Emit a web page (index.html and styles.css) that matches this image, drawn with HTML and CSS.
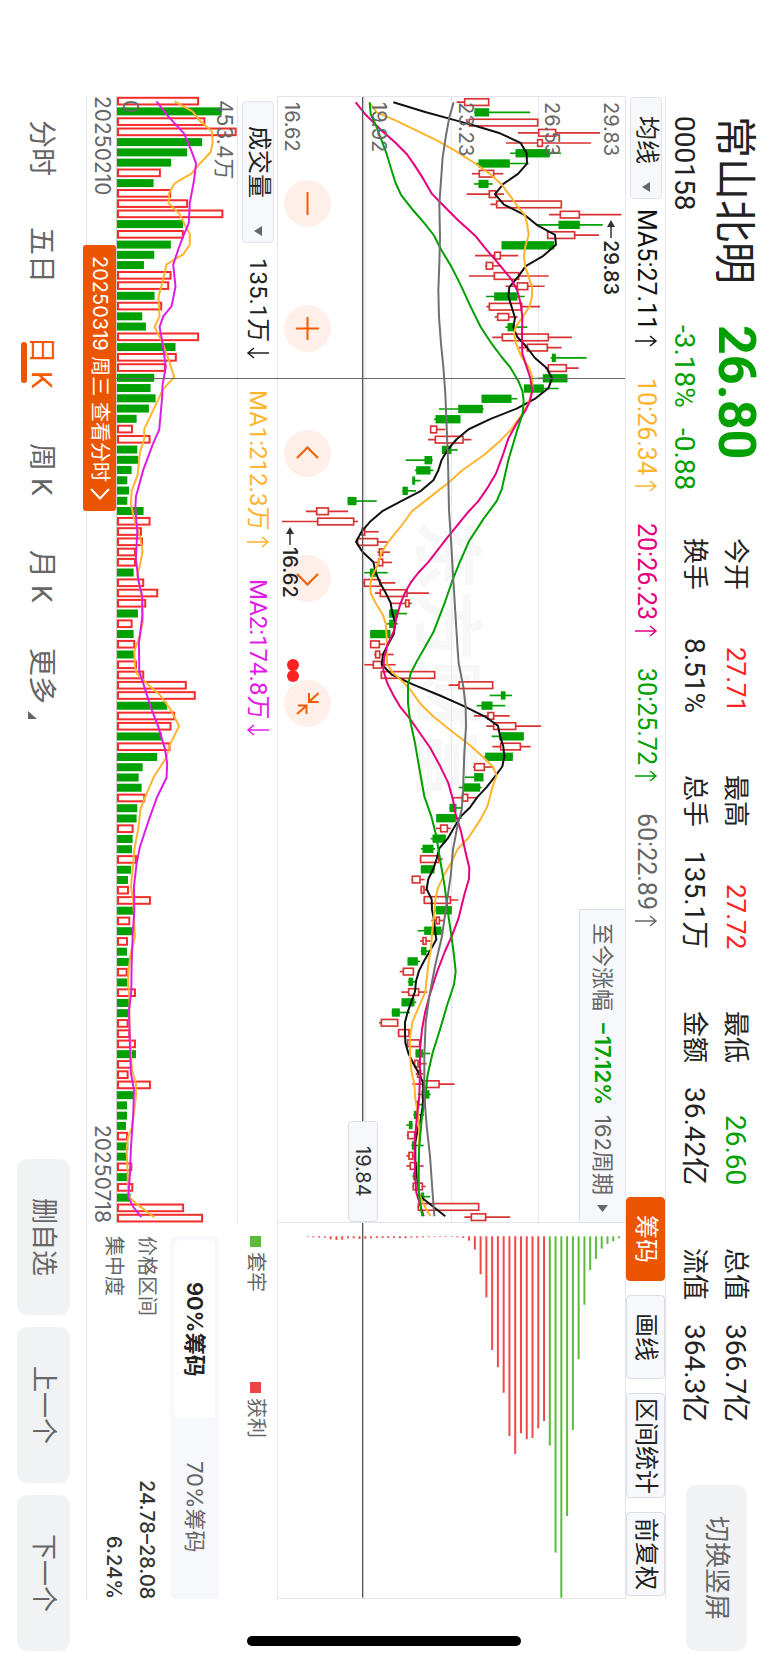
FILE: index.html
```html
<!DOCTYPE html>
<html lang="zh-CN">
<head>
<meta charset="utf-8">
<meta name="viewport" content="width=device-width, initial-scale=1">
<title>常山北明 000158</title>
<link rel="stylesheet" href="styles.css">
</head>
<body>
<div class="screen">
  <header class="quote">
    <div class="identity">
      <h1 class="name">常山北明</h1>
      <span class="code">000158</span>
    </div>
    <div class="price down">
      <strong class="last">26.80</strong>
      <span class="change"><span>-3.18%</span><span>-0.88</span></span>
    </div>
    <dl class="stats">
      <div><dt>今开</dt><dd class="up">27.71</dd></div>
      <div><dt>最高</dt><dd class="up">27.72</dd></div>
      <div><dt>最低</dt><dd class="down">26.60</dd></div>
      <div><dt>总值</dt><dd>366.7亿</dd></div>
      <div><dt>换手</dt><dd>8.51%</dd></div>
      <div><dt>总手</dt><dd>135.1万</dd></div>
      <div><dt>金额</dt><dd>36.42亿</dd></div>
      <div><dt>流值</dt><dd>364.3亿</dd></div>
    </dl>
    <button class="soft-btn rotate-btn" type="button">切换竖屏</button>
  </header>

  <main class="board">
    <div class="toolbar">
      <span class="picker picker-main">
        <select aria-label="主图指标"><option>均线</option></select>
        <svg class="caret" viewBox="0 0 8 10"><path d="M8 0V10L0 5Z"/></svg>
      </span>
      <div class="legend">
        <span class="ma5">MA5:27.11<svg class="trend" viewBox="0 0 24 12"><path d="M1 6H22M16 1L22 6L16 11"/></svg></span>
        <span class="ma10">10:26.34<svg class="trend" viewBox="0 0 24 12"><path d="M1 6H22M16 1L22 6L16 11"/></svg></span>
        <span class="ma20">20:26.23<svg class="trend" viewBox="0 0 24 12"><path d="M1 6H22M16 1L22 6L16 11"/></svg></span>
        <span class="ma30">30:25.72<svg class="trend" viewBox="0 0 24 12"><path d="M1 6H22M16 1L22 6L16 11"/></svg></span>
        <span class="ma60">60:22.89<svg class="trend" viewBox="0 0 24 12"><path d="M1 6H22M16 1L22 6L16 11"/></svg></span>
      </div>
      <div class="tools">
        <button class="tool active" type="button">筹码</button>
        <button class="tool" type="button">画线</button>
        <button class="tool tool-wide" type="button">区间统计</button>
        <button class="tool" type="button">前复权</button>
      </div>
    </div>

    <section class="kline" aria-label="日K线图">
      <div class="watermark" aria-hidden="true">东方财富</div>
      <svg id="kline" class="plot" viewBox="24 0 1041 3380" preserveAspectRatio="none"></svg>
      <div class="axis">
        <div><span>29.83</span><span>26.53</span></div>
        <div><span>23.23</span></div>
        <div><span>19.92</span></div>
        <div><span>16.62</span></div>
      </div>
      <div class="pads">
        <button class="pad" type="button" aria-label="缩小"><svg viewBox="0 0 47 47"><path d="M23.500 12V35"/></svg></button>
        <button class="pad" type="button" aria-label="放大"><svg viewBox="0 0 47 47"><path d="M23.500 12V35M12 23.500H35"/></svg></button>
        <button class="pad" type="button" aria-label="左移"><svg viewBox="0 0 47 47"><path d="M13 28L23.500 17.500L34 28"/></svg></button>
        <button class="pad" type="button" aria-label="右移"><svg viewBox="0 0 47 47"><path d="M13 19L23.500 29.500L34 19"/></svg></button>
        <button class="pad" type="button" aria-label="收起"><svg viewBox="0 0 47 47"><path d="M13 34L22 26M14 25.500H22.500V34M34.500 13L25.500 21.500M25 13V22H34.500"/></svg></button>
      </div>
      <div class="mark mark-high"><svg class="pointer" viewBox="0 0 8 18"><path d="M4 5V18" /><path class="head" d="M4 0L8 7H0Z"/></svg>29.83</div>
      <div class="mark mark-low"><svg class="pointer" viewBox="0 0 8 18"><path d="M4 5V18" /><path class="head" d="M4 0L8 7H0Z"/></svg>16.62</div>
      <svg class="events" viewBox="0 0 12 23"><circle cx="6" cy="6" r="6"/><circle cx="6" cy="17" r="6"/></svg>
      <button class="range" type="button">至今涨幅 <b class="down">−17.12%</b> 162周期 <svg class="next" viewBox="0 0 11 7"><path d="M0 0H11L5.500 7Z"/></svg></button>
      <output class="cursor-price">19.84</output>
    </section>

    <section class="chips" aria-label="筹码分布">
      <svg id="chips" class="plot" viewBox="24 0 1041 1128" preserveAspectRatio="none"></svg>
    </section>

    <div class="volume-bar">
      <span class="picker picker-volume">
        <select aria-label="副图指标"><option>成交量</option></select>
        <svg class="caret" viewBox="0 0 8 10"><path d="M8 0V10L0 5Z"/></svg>
      </span>
      <div class="legend">
        <span class="vol">135.1万<svg class="trend" viewBox="0 0 24 12"><path d="M23 6H2M8 1L2 6L8 11"/></svg></span>
        <span class="ma10">MA1:212.3万<svg class="trend" viewBox="0 0 24 12"><path d="M1 6H22M16 1L22 6L16 11"/></svg></span>
        <span class="vma2">MA2:174.8万<svg class="trend" viewBox="0 0 24 12"><path d="M23 6H2M8 1L2 6L8 11"/></svg></span>
      </div>
    </div>

    <section class="volume" aria-label="成交量图">
      <svg id="volume" class="plot" viewBox="111 0 361 3380" preserveAspectRatio="none"></svg>
      <div class="volume-axis"><span>453.4万</span><span>0</span></div>
    </section>

    <div class="dates">
      <time datetime="2025-02-10">20250210</time>
      <time datetime="2025-07-18">20250718</time>
      <button class="day-tip" type="button">20250319 周三 查看分时<svg viewBox="0 0 20 12"><path d="M1 1L10 10.500L19 1"/></svg></button>
    </div>

    <aside class="chip-info">
      <div class="chip-legend">
        <span><i class="dot dot-green"></i>套牢</span>
        <span><i class="dot dot-red"></i>获利</span>
      </div>
      <div class="segment">
        <button class="on" type="button">90%筹码</button>
        <button type="button">70%筹码</button>
      </div>
      <dl class="chip-rows">
        <div><dt>价格区间</dt><dd>24.78–28.08</dd></div>
        <div><dt>集中度</dt><dd>6.24%</dd></div>
      </dl>
    </aside>
    <div class="crosshair"></div>
  </main>

  <footer class="bottom">
    <nav class="tabs">
      <a href="#">分时</a>
      <a href="#">五日</a>
      <a href="#" class="current" aria-current="page">日 K</a>
      <a href="#">周 K</a>
      <a href="#">月 K</a>
      <a href="#">更多<svg class="corner" viewBox="0 0 9 8"><path d="M0 0V8H9Z"/></svg></a>
    </nav>
    <div class="actions">
      <button class="soft-btn" type="button">删自选</button>
      <button class="soft-btn" type="button">上一个</button>
      <button class="soft-btn" type="button">下一个</button>
    </div>
  </footer>
  <div class="home-indicator"></div>
</div>
<script src="charts.js"></script>
</body>
</html>
```

FILE: styles.css
```css
:root {
  --green: #00a000;
  --red: #ff2222;
  --orange: #eb5500;
  --ink: #222;
  --muted: #666;
  --line: #e2e4e9;
  --panel: #f7f8fb;
  --soft: #f1f2f4;
  --num: Roboto, "Noto Sans CJK SC", sans-serif;
  --label: Inter, "Noto Sans CJK SC", sans-serif;
}

* { box-sizing: border-box; }

html { writing-mode: vertical-rl; }

body {
  margin: 0;
  writing-mode: vertical-rl;
  text-orientation: sideways;
  background: #fff;
  color: var(--ink);
  font: 24px/1.2 var(--num);
}

button, select {
  writing-mode: inherit;
  text-orientation: inherit;
  font: inherit;
  color: inherit;
  border: 0;
  padding: 0;
  margin: 0;
  background: none;
  cursor: pointer;
}

h1, dl, dd { margin: 0; font-weight: inherit; }

svg { display: block; flex: none; }

.up { color: var(--red); }
.down { color: var(--green); }

.screen {
  position: relative;
  display: flex;
  flex-direction: column;
  inline-size: 100%;
  min-inline-size: 100vh;
  min-block-size: 100vw;
}

/* Quote header */
.quote {
  display: flex;
  align-items: flex-start;
  block-size: 102px;
  padding-inline: 116px 12px;
}

.identity, .price { display: flex; flex-direction: column; }
.identity { margin-inline-end: 41px; }
.price { margin-inline-end: 48px; }

.name {
  font-size: 42px;
  line-height: 50px;
  margin-block-start: 9px;
}

.last {
  font-size: 52px;
  line-height: 50px;
  font-weight: 700;
  margin-block-start: 7px;
}

.code, .change {
  font-size: 28px;
  line-height: 32px;
  margin-block-start: 9px;
}

.change { display: flex; gap: 20px; margin-block-start: 11px; }

.stats {
  flex: 1;
  display: grid;
  grid-template-columns: repeat(4, 1fr);
  column-gap: 62px;
  margin-block-start: 12px;
  margin-inline-end: 63px;
  font-size: 26px;
  line-height: 41px;
}

.stats div { display: flex; justify-content: space-between; white-space: nowrap; }
.stats dd:not(.up) { font-size: 28px; }

.soft-btn {
  flex: none;
  inline-size: 156px;
  block-size: 53px;
  border-radius: 10px;
  background: var(--soft);
  color: var(--muted);
  font-size: 26px;
}

.rotate-btn {
  inline-size: 166px;
  block-size: 61px;
  margin-block-start: 21px;
}

/* Chart board */
.board {
  position: relative;
  flex: 1;
  display: grid;
  grid-template-columns: 3fr 1fr;
  grid-template-rows: 41px 1fr 40px 121px 30px;
  margin-inline: 96px 64px;
}

.toolbar {
  grid-column: 1 / -1;
  display: flex;
  align-items: center;
  border-block: 1px solid var(--line);
}

.picker {
  position: relative;
  display: flex;
  align-items: center;
  border: 1px solid var(--line);
  border-radius: 4px;
  background: var(--panel);
}

.picker select {
  appearance: none;
  inline-size: 100%;
  block-size: 100%;
  line-height: 28px;
}

.picker-main { inline-size: 102px; block-size: 32px; margin-inline-start: 1px; }
.picker-main select { padding-inline-start: 18px; }
.picker-volume { inline-size: 142px; block-size: 32px; margin-inline-start: 5px; }
.picker-volume select { padding-inline-start: 24px; }

.caret {
  position: absolute;
  inset-inline-end: 6px;
  width: 8px;
  height: 10px;
  fill: var(--muted);
  pointer-events: none;
}

.legend { display: flex; gap: 31px; font-size: 25px; white-space: nowrap; }
.toolbar .legend { margin-inline-start: 10px; }
.volume-bar .legend { margin-inline-start: 15px; font-size: 24px; }
.legend > span { display: flex; align-items: center; gap: 5px; }

.trend {
  width: 24px;
  height: 12px;
  fill: none;
  stroke: currentColor;
  stroke-width: 1.500;
}

.ma5 { color: #111; }
.ma10 { color: #ffb42e; }
.ma20 { color: #e6007e; }
.ma30 { color: var(--green); }
.ma60 { color: var(--muted); }
.vma2 { color: #e01be6; }

.tools { display: flex; gap: 14px; margin-inline: auto 3px; }

.tool {
  inline-size: 84px;
  block-size: 39px;
  border: 1px solid #dcdee6;
  border-radius: 4px;
  background: var(--panel);
  white-space: nowrap;
}

.tool-wide { inline-size: 105px; }
.tool.active { background: var(--orange); border-color: var(--orange); color: #fff; }

.kline, .chips, .volume { position: relative; min-inline-size: 0; }
.kline { border-block-end: 1px solid var(--line); border-inline: 1px solid var(--line); }
.chips { border-block-end: 1px solid var(--line); border-inline-end: 1px solid var(--line); }

.plot { position: absolute; inset: 0; width: 100%; height: 100%; }

.grid { stroke: #e2e4ee; stroke-width: 3; }
.cursor { stroke: #555; stroke-width: 4; }
.series { fill: none; stroke-width: 6; stroke-linejoin: round; }
.rise { fill: #fff; stroke: #d83333; stroke-width: 5; }
.fall { fill: var(--green); stroke: var(--green); stroke-width: 5; }
.vol-rise { fill: #fff; stroke: #f52c2c; stroke-width: 6; }
.vol-fall { fill: var(--green); }

.watermark {
  position: absolute;
  inset: 0;
  display: flex;
  align-items: center;
  justify-content: center;
  color: #f7f7f7;
  font: 700 70px/1 "Noto Sans CJK SC", sans-serif;
}

.axis {
  position: absolute;
  inset-block: 0;
  inset-inline-start: 5px;
  display: grid;
  grid-template-rows: repeat(4, 1fr);
  font: 20px/28px var(--label);
  color: var(--muted);
}

.axis div { display: flex; flex-direction: column; justify-content: flex-end; }
.axis div:first-child { justify-content: space-between; }

.pads {
  position: absolute;
  inset-block-end: 6px;
  inset-inline-start: 83px;
  display: flex;
  gap: 78px;
}

.pad {
  inline-size: 47px;
  block-size: 47px;
  border-radius: 50%;
  background: rgba(250, 130, 70, .12);
}

.pad svg {
  width: 47px;
  height: 47px;
  fill: none;
  stroke: #f45a00;
  stroke-width: 2;
}

.mark {
  position: absolute;
  display: flex;
  align-items: center;
  gap: 2px;
  font: 500 20px/24px var(--label);
}

.mark-high { inset-block-start: 2px; inset-inline-start: 123px; }
.mark-low { inset-block-end: 0; inset-inline-start: 430px; }
.pointer { width: 8px; height: 18px; stroke: #333; stroke-width: 1.500; }
.pointer .head { fill: #333; stroke: none; }

.events {
  position: absolute;
  inset-block-end: 9px;
  inset-inline-start: 562px;
  width: 12px;
  height: 23px;
  fill: var(--red);
}

.range {
  position: absolute;
  inset-block-start: 0;
  inset-inline-end: 0;
  display: flex;
  align-items: center;
  gap: 10px;
  inline-size: 313px;
  block-size: 46px;
  padding-inline-start: 13px;
  border: 1px solid #dcdee6;
  border-block-start: 0;
  border-inline-end: 0;
  background: var(--panel);
  color: var(--muted);
  font: 22px/1 var(--label);
  white-space: nowrap;
}

.range b { font-weight: 600; }
.next { width: 11px; height: 7px; fill: var(--muted); }

.cursor-price {
  position: absolute;
  inset-block-end: 70px;
  inset-inline-end: 0;
  inline-size: 101px;
  block-size: 30px;
  border: 1px solid #dcdee6;
  border-radius: 4px;
  background: var(--panel);
  color: #333;
  font: 20px/28px var(--label);
  text-align: center;
}

.volume-bar {
  grid-column: 1;
  display: flex;
  align-items: center;
  border-block-end: 1px solid var(--line);
}

.volume { grid-column: 1; border-block-end: 1px solid #ccc; }

.volume-axis {
  position: absolute;
  inset-block: 0 0;
  inset-inline-start: 4px;
  display: flex;
  flex-direction: column;
  justify-content: space-between;
  font: 21px/26px var(--label);
  color: var(--muted);
}

.dates {
  position: relative;
  grid-column: 1;
  display: flex;
  justify-content: space-between;
  border-block-end: 1px solid var(--line);
  font: 21px/27px var(--label);
  color: var(--muted);
}

.day-tip {
  position: absolute;
  inset-block-start: 0;
  inset-inline-start: 149px;
  display: flex;
  align-items: center;
  justify-content: center;
  gap: 6px;
  inline-size: 266px;
  block-size: 33px;
  border-radius: 3px;
  background: var(--orange);
  color: #fff;
  font-size: 20px;
  white-space: nowrap;
}

.day-tip svg { width: 20px; height: 12px; fill: none; stroke: #fff; stroke-width: 2; }

.crosshair {
  position: absolute;
  inset-block: 41px 30px;
  inset-inline-start: 282px;
  inline-size: 1px;
  background: #666;
}

.chip-info {
  grid-column: 2;
  grid-row: 3 / 6;
  padding-inline-start: 13px;
  border-block-end: 1px solid var(--line);
  font: 20px/33px var(--label);
  color: var(--muted);
}

.chip-legend {
  display: grid;
  grid-template-columns: 146px 1fr;
  margin-block: 5px 20px;
}

.chip-legend span { display: flex; align-items: center; gap: 5px; }
.dot { inline-size: 11px; block-size: 11px; }
.dot-green { background: #5abb3c; }
.dot-red { background: #eb4545; }

.segment {
  display: flex;
  block-size: 49px;
  padding: 4px;
  border-radius: 6px;
  background: var(--panel);
  font-size: 22px;
}

.segment button { flex: 1; border-radius: 6px; }
.segment .on { background: #fff; color: var(--ink); font-weight: 600; }

.chip-rows { margin-block-start: 7px; }
.chip-rows div { display: flex; justify-content: space-between; }
.chip-rows dd { color: #333; font-weight: 500; }

/* Bottom bar */
.bottom {
  flex: none;
  display: flex;
  align-items: center;
  justify-content: space-between;
  block-size: 86px;
  padding-inline: 95px 12px;
}

.tabs {
  display: grid;
  grid-template-columns: repeat(6, 107px);
  margin-block-start: 4px;
}

.tabs a {
  position: relative;
  display: flex;
  align-items: center;
  justify-content: center;
  gap: 7px;
  color: var(--muted);
  font-size: 28px;
  line-height: 34px;
  text-decoration: none;
}

.tabs .current { color: #f45a00; }

.tabs .current::after {
  content: "";
  position: absolute;
  inset-block-end: -3px;
  inset-inline: 33px;
  block-size: 6px;
  border-radius: 3px;
  background: var(--orange);
}

.corner { align-self: flex-end; width: 9px; height: 8px; margin-block-end: 4px; fill: var(--muted); }

.actions { display: flex; gap: 12px; }

.home-indicator {
  position: absolute;
  inset-inline-end: 17px;
  inset-block: 247px;
  inline-size: 10px;
  border-radius: 5px;
  background: #000;
}
```

FILE: charts.js
```js
const NS = "http://www.w3.org/2000/svg";
const STEP = 3380 / 110;

function add(parent, tag, attrs) {
  const el = document.createElementNS(NS, tag);
  for (const key in attrs) el.setAttribute(key, attrs[key]);
  parent.appendChild(el);
  return el;
}

function line(parent, cls, x1, y1, x2, y2) {
  add(parent, "line", { class: cls, x1, y1, x2, y2 });
}

function series(parent, color, points) {
  add(parent, "polyline", { class: "series", stroke: color, points });
}

// Each candle: direction, low, high, body low, body high.
const candles = `r560,657,584,656 g612,780,616,655 r590,805,598,803 r744,990,806,857 r708,963,803,817
g720,873,739,837 g618,776,628,717 r606,700,628,671 g612,668,628,653 r590,702,658,677
r661,875,680,874 r837,1054,871,928 g800,998,868,927 r831,987,833,914 g696,855,697,850
r615,745,674,691 r645,692,649,668 r597,836,673,746 r706,824,742,773 g648,764,675,740
r649,810,658,755 r674,743,683,716 g706,772,715,732 r667,906,697,835 r747,875,772,832
g842,950,848,855 r825,926,835,889 g803,890,821,890 g762,866,764,819 g636,742,637,722
g507,641,567,636 g492,571,499,569 r480,526,482,500 r474,604,496,579 g516,563,518,542
g407,488,466,484 g435,490,441,479 g427,452,429,433 g397,438,400,411 g234,320,235,257
r108,234,140,175 r36,264,143,251 r273,326,276,284 r260,351,263,323 r322,360,328,338
r313,366,326,338 g283,353,302,318 r280,376,283,330 r315,477,331,411 r361,425,407,417
g358,411,360,382 g350,383,360,369 g300,360,303,359 r300,345,302,328 r312,371,317,329
r283,377,310,335 r332,495,334,494 r536,669,567,668 g659,726,695,704 g620,706,637,665
r612,719,654,671 r649,813,671,737 g665,760,690,759 r667,782,692,751 g643,728,648,726
r609,670,614,643 g585,639,615,638 g566,635,583,628 r548,622,577,593 g539,576,541,557
g500,575,501,555 r498,542,512,532 g482,525,490,525 g453,495,460,488 r449,518,452,506
g452,493,455,491 r425,464,427,450 r451,474,454,462 r460,565,463,541 g495,544,500,543
r484,520,499,508 g443,518,465,512 r450,482,459,468 g452,482,456,467 g413,450,415,441
r389,432,400,430 g413,440,418,427 r394,472,416,446 g395,439,397,431 g365,420,368,387
r327,385,334,383 r383,418,386,417 r410,450,413,449 g437,480,439,457 r432,470,434,444
r437,460,443,452 r427,554,460,507 g443,482,457,476 g438,462,441,445 g430,462,434,438
g409,428,419,425 r410,436,414,434 g424,461,428,434 r409,435,417,428 r409,461,421,440
g427,445,432,436 r427,467,430,457 g453,480,456,460 r442,627,445,626 r583,720,604,647`.split(/\s+/);

const kline = document.getElementById("kline");
[283, 543, 803].forEach(x => line(kline, "grid", x + 2, 0, x + 2, 3380));
candles.forEach((item, i) => {
  const [low, high, a, b] = item.slice(1).split(",").map(Number);
  const y = (i + 0.5) * STEP;
  const cls = item[0] === "r" ? "rise" : "fall";
  line(kline, cls, low, y, high, y);
  add(kline, "rect", { class: cls, x: a, y: y - 10, width: b - a, height: 20 });
});

series(kline, "#111", "370,16 468,46 560,71 620,88 690,109 752,138 770,169 771,200 744,231 700,261 675,292 702,323 765,355 800,384 855,414 858,444 820,477 767,508 745,539 718,571 715,599 725,631 735,663 730,692 742,721 770,751 795,784 830,814 846,845 835,875 797,905 740,936 662,967 596,998 560,1028 533,1059 515,1090 505,1121 490,1151 453,1183 395,1213 337,1244 300,1276 275,1305 258,1336 278,1367 310,1397 317,1428 330,1459 347,1489 362,1520 367,1551 376,1581 371,1614 355,1643 339,1674 335,1704 365,1735 430,1765 508,1797 580,1829 645,1861 684,1889 690,1919 700,1951 703,1981 697,2011 674,2042 650,2073 622,2103 600,2134 572,2161 552,2195 534,2226 508,2257 500,2288 490,2319 475,2349 470,2379 485,2410 486,2441 492,2472 495,2503 499,2531 481,2563 463,2594 447,2625 438,2656 435,2687 424,2718 413,2749 405,2779 405,2810 406,2841 415,2872 430,2903 447,2933 459,2961 460,2994 458,3031 452,3071 443,3101 436,3141 436,3201 443,3261 449,3301 488,3332 526,3362");
series(kline, "#ffb42e", "298,16 320,46 378,71 440,101 502,131 555,161 610,196 660,231 695,263 722,299 745,332 765,355 772,385 776,415 766,449 762,477 765,508 776,539 786,571 786,599 778,630 758,661 738,688 732,711 738,741 755,781 776,811 788,844 787,881 775,921 752,959 724,998 690,1033 640,1077 577,1121 533,1161 500,1186 425,1245 395,1287 355,1336 335,1368 321,1411 308,1436 301,1461 302,1490 318,1522 338,1554 347,1581 350,1621 351,1704 370,1731 400,1758 425,1786 453,1825 490,1861 550,1909 600,1947 640,1983 668,2011 680,2038 668,2071 652,2131 632,2169 595,2226 563,2259 545,2297 520,2341 503,2378 496,2413 492,2461 486,2511 483,2561 476,2596 470,2651 466,2688 445,2736 427,2779 420,2826 420,2881 425,2931 433,2963 436,3011 445,3061 448,3121 445,3221 447,3296 466,3336 481,3362");
series(kline, "#e6007e", "257,16 285,51 335,101 375,136 410,171 433,204 460,246 486,291 520,326 565,371 615,416 645,453 690,506 725,549 742,581 752,621 757,661 756,721 757,771 770,811 781,845 787,881 780,913 765,944 740,981 715,1026 700,1071 678,1131 650,1178 625,1214 596,1245 560,1289 530,1326 475,1397 445,1429 422,1459 405,1489 392,1520 380,1561 371,1606 352,1646 342,1687 340,1721 352,1761 370,1797 390,1831 420,1868 450,1911 480,1954 510,2009 535,2061 549,2111 556,2151 573,2206 585,2261 598,2316 597,2348 583,2396 565,2469 546,2519 525,2566 500,2631 478,2701 465,2751 456,2801 450,2861 450,2931 448,3001 441,3061 434,3141 435,3231 439,3291 450,3326 461,3362");
series(kline, "#00a000", "299,16 302,51 318,86 335,131 350,171 362,211 376,256 393,294 430,341 465,381 492,416 515,461 545,511 575,571 600,626 632,691 665,741 695,781 720,811 745,853 757,883 761,911 758,951 740,1006 715,1091 695,1179 680,1214 640,1268 596,1336 570,1396 547,1453 525,1517 490,1608 460,1661 440,1696 422,1731 414,1766 414,1821 420,1871 435,1941 447,2011 463,2101 484,2161 498,2216 512,2301 524,2371 534,2451 544,2519 551,2571 557,2626 552,2666 532,2726 510,2801 488,2871 473,2936 466,3001 455,3071 447,3161 446,3241 446,3291 452,3331 457,3362");
series(kline, "#707070", "551,16 538,61 527,121 518,181 513,251 508,321 510,421 508,501 505,581 507,661 513,741 520,811 526,891 530,991 534,1091 537,1241 543,1331 550,1451 558,1581 563,1661 566,1701 580,1771 587,1831 588,1891 583,1971 579,2091 575,2141 562,2191 549,2261 542,2341 530,2421 516,2521 495,2611 478,2701 467,2781 463,2881 463,3001 470,3091 480,3181 487,3281 493,3362");
line(kline, "cursor", 278, 0, 278, 3380);

// Traded volume per day; each value is the end of the bar.
const volumes = `r357 g426 r376 r470 g367 g322 g274 r242 g221 r273 r324 r430 g310 r311 g273 g223 g192 r274 r267 g224
r246 g187 g198 r357 g287 r290 r257 g223 g212 g227 g207 g170 r158 r211 g172 g175 g155 g142 g147 g142
g191 r211 r185 r188 r167 r167 g161 r192 r234 r198 g174 r157 g161 r165 g165 r170 r192 r320 r347 g262
r285 r274 g246 r271 g232 g188 g176 g185 r195 g172 g170 r160 g158 g156 r170 g153 g144 r146 r212 g161
r150 g157 r143 g141 g147 r142 g142 r167 g147 g148 r145 r150 r167 g168 r155 r145 r212 g162 g141 g141
g138 r143 g145 g142 r156 g145 r159 g152 r312 r369`.split(/\s+/);

const volume = document.getElementById("volume");
volumes.forEach((item, i) => {
  const end = Number(item.slice(1));
  const y = (i + 0.5) * STEP;
  if (item[0] === "r") {
    add(volume, "rect", { class: "vol-rise", x: 114, y: y - 10, width: end - 116, height: 20 });
  } else {
    add(volume, "rect", { class: "vol-fall", x: 110, y: y - 12, width: end - 110, height: 24 });
  }
});
series(volume, "#ffb42e", "284,16 338,46 362,76 396,106 399,138 393,168 360,203 335,233 285,261 268,291 266,321 300,355 315,386 330,414 330,446 310,475 260,505 247,561 236,601 239,661 224,692 248,741 270,801 283,843 250,879 225,931 193,999 193,1028 180,1068 173,1136 155,1184 153,1223 163,1271 180,1321 188,1366 180,1406 172,1436 180,1471 187,1511 189,1576 180,1616 163,1666 165,1711 170,1731 200,1761 240,1796 270,1836 298,1889 272,1941 258,1986 222,2041 195,2104 182,2136 175,2196 163,2261 160,2301 153,2371 160,2411 162,2461 165,2521 152,2571 146,2621 144,2661 149,2706 148,2771 152,2851 156,2921 168,2961 168,3001 160,3061 155,3096 144,3121 140,3161 143,3231 145,3291 148,3303 182,3331 223,3362");
series(volume, "#e01be6", "230,16 265,61 313,113 335,165 349,203 343,251 330,321 327,381 310,421 295,461 280,506 287,571 275,631 250,661 239,693 248,741 258,813 248,866 247,901 238,1001 220,1041 190,1121 168,1201 166,1236 172,1306 168,1386 175,1451 187,1501 187,1561 177,1641 178,1726 190,1761 212,1831 235,1891 255,1956 262,2001 260,2044 232,2101 205,2176 180,2251 170,2301 162,2371 163,2441 158,2521 155,2601 154,2686 147,2741 150,2851 153,2931 162,2981 160,3051 153,3151 150,3231 145,3301 160,3331 184,3362");

// Holding cost distribution, from the highest price level down.
const trapped = [6, 15, 23, 37, 68, 102, 206, 370, 583, 842, 1088, 952, 630];
const profit = [556, 578, 607, 611, 593, 655, 601, 471, 394, 342, 184, 114, 40, 13, 5, 3, 2, 2, 2, 2, 2, 3, 4, 4, 6, 6, 5, 5, 5, 5, 6, 7, 8, 6, 6, 10, 11, 9, 4, 4, 3, 2];
const chips = document.getElementById("chips");
trapped.concat(profit).forEach((length, i) => {
  const fill = i < trapped.length ? "#5abb3c" : "#ef4a4a";
  add(chips, "rect", { x: 1044 - i * 17.3, y: 40, width: 6, height: length, fill });
});
line(chips, "cursor", 278, 0, 278, 1128);
```
